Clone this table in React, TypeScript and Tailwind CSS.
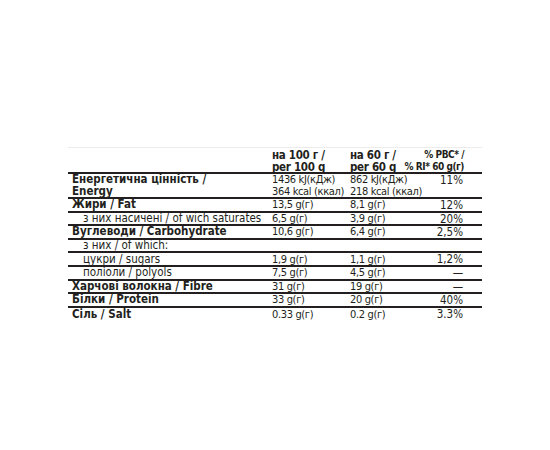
import React from 'react';

type Row = {
  label: React.ReactNode;
  bold?: boolean;
  indent?: boolean;
  per100?: React.ReactNode;
  per60?: React.ReactNode;
  ri?: React.ReactNode;
  tall?: boolean;
  noLine?: boolean;
};

const rows: Row[] = [
  {
    label: (
      <>
        Енергетична цінність /<br />
        Energy
      </>
    ),
    bold: true,
    per100: (
      <>
        1436 kJ(кДж)
        <br />
        364 kcal (ккал)
      </>
    ),
    per60: (
      <>
        862 kJ(кДж)
        <br />
        218 kcal (ккал)
      </>
    ),
    ri: '11%',
    tall: true,
  },
  { label: 'Жири / Fat', bold: true, per100: '13,5 g(г)', per60: '8,1 g(г)', ri: '12%' },
  { label: 'з них насичені / of wich saturates', indent: true, per100: '6,5 g(г)', per60: '3,9 g(г)', ri: '20%' },
  { label: 'Вуглеводи / Carbohydrate', bold: true, per100: '10,6 g(г)', per60: '6,4 g(г)', ri: '2,5%' },
  { label: 'з них / of which:', indent: true },
  { label: 'цукри / sugars', indent: true, per100: '1,9 g(г)', per60: '1,1 g(г)', ri: '1,2%' },
  { label: 'поліоли / polyols', indent: true, per100: '7,5 g(г)', per60: '4,5 g(г)', ri: '—' },
  { label: 'Харчові волокна / Fibre', bold: true, per100: '31 g(г)', per60: '19 g(г)', ri: '—' },
  { label: 'Білки / Protein', bold: true, per100: '33 g(г)', per60: '20 g(г)', ri: '40%' },
  { label: 'Сіль / Salt', bold: true, per100: '0.33 g(г)', per60: '0.2 g(г)', ri: '3.3%', noLine: true },
];

export default function App() {
  return (
    <div
      className="w-[550px] h-[450px] bg-white text-[#231f20] pt-[147px] pl-[68px]"
      style={{ fontFamily: '"DejaVu Sans Condensed", "DejaVu Sans", sans-serif' }}
    >
      <div className="w-[414px] font-stretch-condensed text-[11.5px] leading-[11px] whitespace-nowrap">
        {/* Header */}
        <div className="flex h-[27px] border-t border-[#ececec] border-b-2 border-b-[#231f20] pt-[1px] font-bold leading-[12px] tracking-[-0.3px]">
          <div className="w-[204px] shrink-0" />
          <div className="w-[78px] shrink-0">
            на 100 г /<br />
            per 100 g
          </div>
          <div className="w-[70px] shrink-0">
            на 60 г /<br />
            per 60 g
          </div>
          <div className="flex-1 min-w-0 flex flex-col items-end pr-[18px] text-[10px] tracking-[-0.45px]">
            <span>% РВС* /</span>
            <span>% RI* 60 g(г)</span>
          </div>
        </div>

        {rows.map((r, i) => (
          <div
            key={i}
            className={`flex items-center ${r.tall ? 'h-[25px] leading-[11.5px]' : 'h-[13.6px]'} ${
              r.noLine ? '' : 'border-b-2 border-[#231f20]'
            }`}
          >
            <div
              className={`w-[204px] shrink-0 ${r.bold ? 'font-bold pl-[4px]' : ''} ${
                r.indent ? 'pl-[15px]' : ''
              }`}
            >
              {r.label}
            </div>
            <div className="w-[78px] shrink-0 text-[11px] tracking-[-0.35px]">{r.per100}</div>
            <div className="w-[70px] shrink-0 text-[11px] tracking-[-0.35px]">{r.per60}</div>
            <div className="flex-1 text-right pr-[19px] self-start pt-[1px]">{r.ri}</div>
          </div>
        ))}
      </div>
    </div>
  );
}
